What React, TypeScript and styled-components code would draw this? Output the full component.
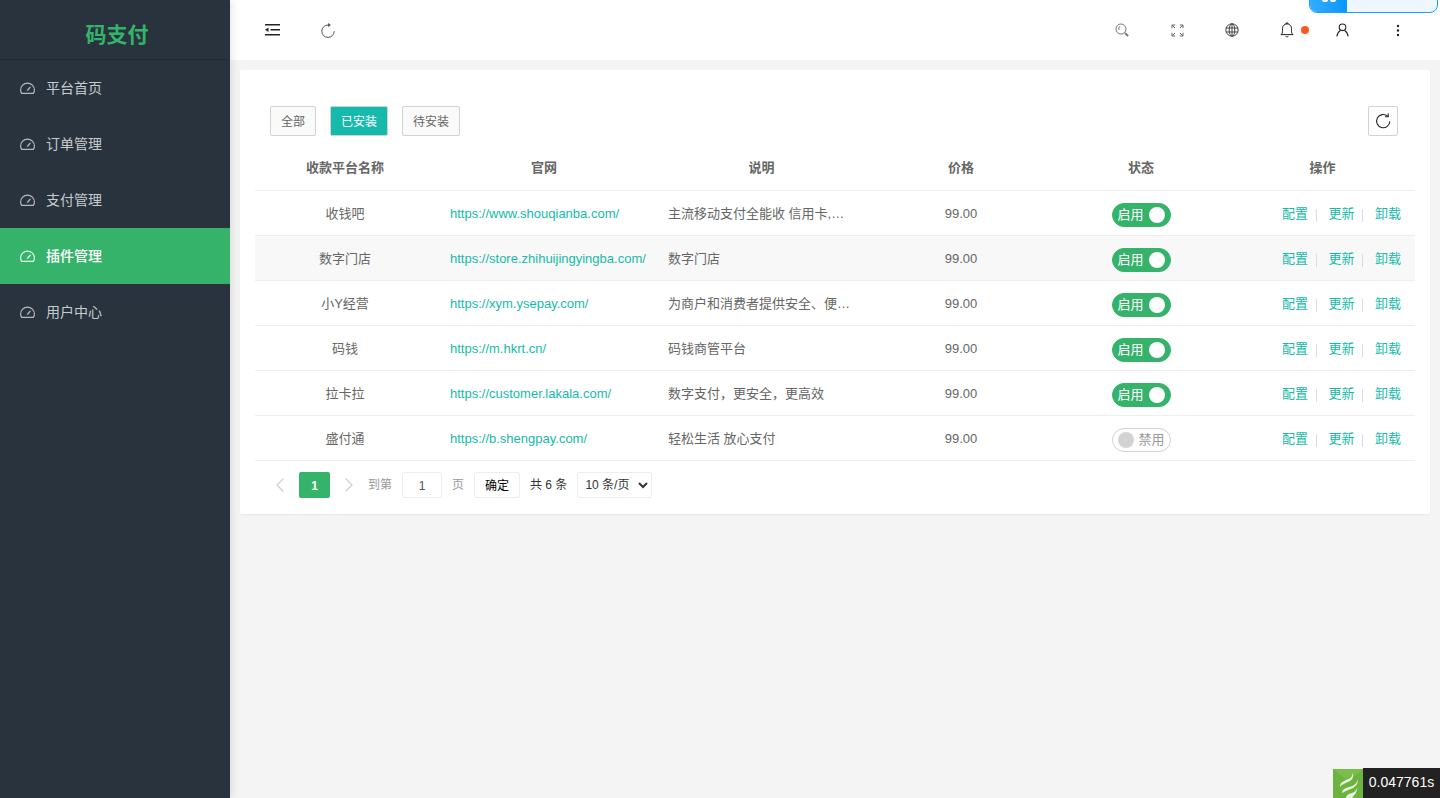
import React from 'react';
import styled, { createGlobalStyle } from 'styled-components';

const GlobalStyle = createGlobalStyle`
  html, body { margin: 0; padding: 0; height: 100%; }
  body {
    background: #f4f4f4;
    font-family: "Liberation Sans", "Noto Sans CJK SC", sans-serif;
    font-size: 13px;
    line-height: 20px;
    color: #666;
    overflow: hidden;
  }
  * { box-sizing: border-box; }
`;

const Page = styled.div`
  display: flex;
  width: 1440px;
  height: 798px;
`;

const Sidebar = styled.aside`
  width: 230px;
  flex-shrink: 0;
  background: #28333e;
  box-shadow: 2px 0 8px rgba(0, 0, 0, 0.1);
  position: relative;
`;

const Brand = styled.div`
  height: 60px;
  display: flex;
  align-items: center;
  justify-content: center;
  font-size: 21px;
  font-weight: 700;
  color: #35b36b;
  border-bottom: 1px solid #222c36;
  padding-top: 11px;
  padding-left: 4px;
`;

const NavList = styled.nav`
  display: flex;
  flex-direction: column;
`;

const NavItem = styled.a<{ $active?: boolean }>`
  height: 56px;
  display: flex;
  align-items: center;
  gap: 11px;
  padding-left: 20px;
  font-size: 14px;
  color: ${p => (p.$active ? '#fff' : '#c7cbcf')};
  background: ${p => (p.$active ? '#35b36b' : 'transparent')};
  font-weight: ${p => (p.$active ? 500 : 400)};
`;

const Main = styled.div`
  flex: 1;
  display: flex;
  flex-direction: column;
  min-width: 0;
`;

const Header = styled.header`
  height: 60px;
  background: #fff;
  display: flex;
  align-items: center;
  justify-content: space-between;
`;

const HeaderGroup = styled.div`
  display: flex;
  align-items: center;
`;

const HeaderIcon = styled.span<{ $nudge?: boolean }>`
  width: 55px;
  height: 60px;
  padding-right: ${p => (p.$nudge ? '2px' : '0')};
  display: flex;
  align-items: center;
  justify-content: center;
  position: relative;
`;

const LeftIcons = styled(HeaderGroup)`
  padding-left: 15px;
`;

const RightIcons = styled(HeaderGroup)`
  padding-right: 15px;
`;

const Dot = styled.i`
  position: absolute;
  left: 41px;
  top: 26px;
  width: 8px;
  height: 8px;
  border-radius: 50%;
  background: #ff5722;
`;

const Content = styled.main`
  padding: 10px;
`;

const Card = styled.section`
  background: #fff;
  height: 444px;
  padding: 36px 15px 0;
  border-radius: 2px;
  box-shadow: 0 1px 2px rgba(0, 0, 0, 0.05);
`;

const Toolbar = styled.div`
  display: flex;
  align-items: center;
  gap: 14px;
  padding: 0 17px 0 15px;
  height: 30px;
`;

const TabButton = styled.button<{ $active?: boolean }>`
  height: 30px;
  padding: 2px 10px 0;
  font: inherit;
  font-size: 12px;
  border-radius: 2px;
  border: 1px solid ${p => (p.$active ? '#c9d6d3' : '#d2d2d2')};
  background: ${p => (p.$active ? '#16baaa' : '#fafafa')};
  color: ${p => (p.$active ? '#fff' : '#666')};
`;

const RefreshButton = styled.button`
  margin-left: auto;
  width: 30px;
  height: 30px;
  padding: 0;
  display: flex;
  align-items: center;
  justify-content: center;
  background: #fff;
  border: 1px solid #d2d2d2;
  border-radius: 2px;
`;

const Table = styled.table`
  width: 1160px;
  margin-top: 10px;
  border-collapse: collapse;
  table-layout: fixed;
`;

const Th = styled.th<{ $w: number }>`
  width: ${p => p.$w}px;
  height: 44px;
  padding: 0;
  font-size: 13px;
  font-weight: 700;
  color: #666;
  text-align: center;
  border-bottom: 1px solid #eee;
`;

const Row = styled.tr<{ $shade?: boolean }>`
  height: 45px;
  background: ${p => (p.$shade ? '#f8f8f8' : '#fff')};
`;

const Td = styled.td<{ $left?: boolean }>`
  padding: 2px ${p => (p.$left ? '15px' : '0')} 0;
  text-align: ${p => (p.$left ? 'left' : 'center')};
  border-bottom: 1px solid #eee;
  color: #666;
  white-space: nowrap;
`;

const Link = styled.a`
  color: #16baaa;
`;

const Switch = styled.span<{ $on: boolean }>`
  display: flex;
  flex-direction: ${p => (p.$on ? 'row' : 'row-reverse')};
  align-items: center;
  justify-content: space-between;
  width: 59px;
  height: 24px;
  margin: 3px auto 0;
  padding: 0 5px;
  border-radius: 12px;
  background: ${p => (p.$on ? '#35b36b' : '#fff')};
  border: 1px solid ${p => (p.$on ? '#35b36b' : '#d2d2d2')};
  color: ${p => (p.$on ? '#fff' : '#999')};
  font-size: 13px;
`;

const Knob = styled.i<{ $on: boolean }>`
  width: 16px;
  height: 16px;
  border-radius: 50%;
  background: ${p => (p.$on ? '#fff' : '#d2d2d2')};
`;

const Actions = styled.div`
  display: flex;
  align-items: center;
  justify-content: flex-end;
  padding-right: 14px;
`;

const ActionLink = styled.a`
  color: #16baaa;
`;

const Divider = styled.i`
  width: 1px;
  height: 13px;
  margin: 3px 11.5px 0 8px;
  background: #d8dce3;
`;

const Pager = styled.div`
  display: flex;
  align-items: center;
  height: 48px;
  padding-left: 20px;
  font-size: 12px;
  color: #999;
`;

const PageArrow = styled.span`
  width: 10px;
  height: 26px;
  display: flex;
  align-items: center;
  justify-content: center;
`;

const PageCurrent = styled.span`
  width: 31px;
  height: 26px;
  margin: 0 14px;
  padding-top: 2px;
  border-radius: 2px;
  background: #35b36b;
  color: #fff;
  font-weight: 700;
  display: flex;
  align-items: center;
  justify-content: center;
`;

const PagerBox = styled.span<{ $w: number; $dark?: boolean }>`
  width: ${p => p.$w}px;
  height: 26px;
  padding-top: 2px;
  border: 1px solid #eee;
  border-radius: 2px;
  display: flex;
  align-items: center;
  justify-content: center;
  background: #fff;
  color: ${p => (p.$dark ? '#000' : '#555')};
`;

const PagerText = styled.span<{ $dark?: boolean; $ml: number; $mr: number }>`
  margin: 0 ${p => p.$mr}px 0 ${p => p.$ml}px;
  color: ${p => (p.$dark ? '#333' : '#999')};
`;

const SizeSelect = styled.select`
  width: 75px;
  height: 26px;
  padding: 0 0 0 3px;
  font: inherit;
  font-size: 12px;
  color: #333;
  background: #fff;
  border: 1px solid #eee;
  border-radius: 2px;
`;

const Notice = styled.div`
  position: absolute;
  right: 2px;
  top: -14px;
  width: 129px;
  height: 27px;
  border: 1px solid #1e9fff;
  border-radius: 8px;
  background: #eef7ff;
  overflow: hidden;
`;

const NoticeBadge = styled.div`
  width: 37px;
  height: 100%;
  background: linear-gradient(90deg, #35adff, #0a96ff);
  display: flex;
  align-items: flex-end;
  justify-content: center;
  gap: 2px;
  padding-bottom: 10px;
`;

const NoticeDot = styled.i`
  width: 6px;
  height: 6px;
  border-radius: 2px;
  background: #fff;
`;

const Trace = styled.div`
  position: absolute;
  right: 0;
  bottom: 0;
  display: flex;
  align-items: flex-end;
`;

const TraceLogo = styled.div`
  width: 30px;
  height: 29px;
  display: flex;
`;

const TraceTime = styled.div`
  width: 77px;
  height: 30px;
  background: #222;
  color: #fff;
  font-size: 14px;
  line-height: 29px;
  text-align: center;
`;

const Gauge = ({ color }: { color: string }) => (
  <svg width="15" height="15" viewBox="0 0 15 15" fill="none" stroke={color} strokeWidth="1.2">
    <path d="M1.6 12.4C.9 11.3.6 10.2.6 9a6.9 6.9 0 0 1 13.8 0c0 1.2-.3 2.3-1 3.4z" />
    <path d="M7.2 9.6 10.4 6" strokeWidth="1.4" />
  </svg>
);

const ShrinkIcon = () => (
  <svg width="15" height="14" viewBox="0 0 15 14" fill="#222">
    <rect x="0" y="1" width="15" height="1.5" />
    <rect x="5.5" y="6" width="9.5" height="1.5" />
    <rect x="0" y="11" width="15" height="1.5" />
    <path d="M0 6.7 3.5 4.6v4.3z" />
  </svg>
);

const HeaderReload = () => (
  <svg width="14" height="15" viewBox="0 0 14 15" fill="none" stroke="#555" strokeWidth="1">
    <path d="M13.2 8.2A6.2 6.2 0 1 1 7 2" />
    <path d="M7 0 10 2 7 4z" fill="#555" stroke="none" />
  </svg>
);

const RefreshIcon = () => (
  <svg width="16" height="16" viewBox="0 0 16 16" fill="none" stroke="#222" strokeWidth="1.1">
    <path d="M14.8 8.2A6.6 6.6 0 1 1 12.6 3.2" />
    <path d="M13.2.6v3.2H10" />
  </svg>
);

const SearchIcon = () => (
  <svg width="14" height="14" viewBox="0 0 14 14" fill="none" stroke="#777" strokeWidth="1">
    <circle cx="6" cy="6" r="5" />
    <path d="M5 3.2A3 3 0 0 0 4 7" />
    <path d="M10 10l3.2 3.2" strokeWidth="1.8" />
  </svg>
);

const ExpandIcon = () => (
  <svg width="13" height="13" viewBox="0 0 13 13" fill="none" stroke="#666" strokeWidth="1">
    <path d="M1 4.2V1h3.2M1 1l3 3M12 4.2V1H8.8M12 1 9 4M1 8.8V12h3.2M1 12l3-3M12 8.8V12H8.8M12 12 9 9" />
  </svg>
);

const GlobeIcon = () => (
  <svg width="14" height="14" viewBox="0 0 14 14" fill="none" stroke="#333" strokeWidth="0.9">
    <circle cx="7" cy="7" r="6.2" />
    <ellipse cx="7" cy="7" rx="2.8" ry="6.2" />
    <path d="M7 .8v12.4M1 5h12M1 9h12" />
  </svg>
);

const BellIcon = () => (
  <svg width="14" height="16" viewBox="0 0 14 16" fill="none" stroke="#222" strokeWidth="1">
    <path d="M1 12.6c1.2-1 1.5-2 1.5-4V6.4a4.5 4.5 0 0 1 9 0v2.2c0 2 .3 3 1.5 4z" />
    <path d="M6 1.9V1h2v.9M5.6 14.3c.7.7 2.1.7 2.8 0" />
  </svg>
);

const UserIcon = () => (
  <svg width="13" height="14" viewBox="0 0 13 14" fill="none" stroke="#222" strokeWidth="1.1">
    <circle cx="6.5" cy="4.3" r="3.3" />
    <path d="M.8 13.4C1.3 10.4 2.6 8.4 4.4 7.4M12.2 13.4c-.5-3-1.8-5-3.6-6" />
  </svg>
);

const MoreIcon = () => (
  <svg width="4" height="13" viewBox="0 0 4 13" fill="#222">
    <circle cx="2" cy="2" r="1.2" />
    <circle cx="2" cy="6.5" r="1.2" />
    <circle cx="2" cy="11" r="1.2" />
  </svg>
);

const Chevron = ({ dir }: { dir: 'left' | 'right' }) => (
  <svg width="10" height="16" viewBox="0 0 10 16" fill="none" stroke="#d2d2d2" strokeWidth="1.4">
    <path d={dir === 'left' ? 'M8.5 1.5 2 8l6.5 6.5' : 'M1.5 1.5 8 8l-6.5 6.5'} />
  </svg>
);

const LogoMark = () => (
  <svg width="30" height="29" viewBox="0 0 30 29">
    <rect width="30" height="29" fill="#6cb33f" />
    <path d="M0 0h30L15 12z" fill="#79bd4a" />
    <path d="M19 4c1 4-2 6-6 7-4 2-6 3-6 7 2-3 6-4 10-6 3-2 4-5 2-8z" fill="#e9f3df" />
    <path d="M24 10c1 4-3 7-8 8-4 1-7 3-7 6 3-2 7-3 11-5 3-2 6-5 4-9z" fill="#e9f3df" />
    <path d="M24 18c0 4-4 6-8 7-2 1-3 2-3 4h6c1-2 6-5 5-11z" fill="#e9f3df" />
  </svg>
);

const navItems = ['平台首页', '订单管理', '支付管理', '插件管理', '用户中心'];
const tabs = ['全部', '已安装', '待安装'];
const columns: [string, number][] = [
  ['收款平台名称', 180],
  ['官网', 218],
  ['说明', 217],
  ['价格', 182],
  ['状态', 178],
  ['操作', 185],
];

const plugins = [
  { name: '收钱吧', url: 'https://www.shouqianba.com/', desc: '主流移动支付全能收 信用卡,…', on: true },
  { name: '数字门店', url: 'https://store.zhihuijingyingba.com/', desc: '数字门店', on: true },
  { name: '小Y经营', url: 'https://xym.ysepay.com/', desc: '为商户和消费者提供安全、便…', on: true },
  { name: '码钱', url: 'https://m.hkrt.cn/', desc: '码钱商管平台', on: true },
  { name: '拉卡拉', url: 'https://customer.lakala.com/', desc: '数字支付，更安全，更高效', on: true },
  { name: '盛付通', url: 'https://b.shengpay.com/', desc: '轻松生活 放心支付', on: false },
];

export default function App() {
  return (
    <>
      <GlobalStyle />
      <Page>
        <Sidebar>
          <Brand>码支付</Brand>
          <NavList>
            {navItems.map((item, i) => (
              <NavItem key={item} $active={i === 3}>
                <Gauge color={i === 3 ? '#e6f6ec' : '#b4b9be'} />
                {item}
              </NavItem>
            ))}
          </NavList>
        </Sidebar>
        <Main>
          <Header>
            <LeftIcons>
              <HeaderIcon><ShrinkIcon /></HeaderIcon>
              <HeaderIcon><HeaderReload /></HeaderIcon>
            </LeftIcons>
            <RightIcons>
              <HeaderIcon $nudge><SearchIcon /></HeaderIcon>
              <HeaderIcon><ExpandIcon /></HeaderIcon>
              <HeaderIcon $nudge><GlobeIcon /></HeaderIcon>
              <HeaderIcon $nudge><BellIcon /><Dot /></HeaderIcon>
              <HeaderIcon><UserIcon /></HeaderIcon>
              <HeaderIcon><MoreIcon /></HeaderIcon>
            </RightIcons>
          </Header>
          <Content>
            <Card>
              <Toolbar>
                {tabs.map((tab, i) => (
                  <TabButton key={tab} $active={i === 1}>{tab}</TabButton>
                ))}
                <RefreshButton><RefreshIcon /></RefreshButton>
              </Toolbar>
              <Table>
                <thead>
                  <tr>
                    {columns.map(([label, w]) => (
                      <Th key={label} $w={w}>{label}</Th>
                    ))}
                  </tr>
                </thead>
                <tbody>
                  {plugins.map((p, i) => (
                    <Row key={p.name} $shade={i === 1}>
                      <Td>{p.name}</Td>
                      <Td $left><Link>{p.url}</Link></Td>
                      <Td $left>{p.desc}</Td>
                      <Td>99.00</Td>
                      <Td>
                        <Switch $on={p.on}>
                          {p.on ? '启用' : '禁用'}
                          <Knob $on={p.on} />
                        </Switch>
                      </Td>
                      <Td>
                        <Actions>
                          <ActionLink>配置</ActionLink>
                          <Divider />
                          <ActionLink>更新</ActionLink>
                          <Divider />
                          <ActionLink>卸载</ActionLink>
                        </Actions>
                      </Td>
                    </Row>
                  ))}
                </tbody>
              </Table>
              <Pager>
                <PageArrow><Chevron dir="left" /></PageArrow>
                <PageCurrent>1</PageCurrent>
                <PageArrow><Chevron dir="right" /></PageArrow>
                <PagerText $ml={14} $mr={10}>到第</PagerText>
                <PagerBox $w={40}>1</PagerBox>
                <PagerText $ml={10} $mr={10}>页</PagerText>
                <PagerBox $w={46} $dark>确定</PagerBox>
                <PagerText $dark $ml={10} $mr={10}>共 6 条</PagerText>
                <SizeSelect defaultValue="10">
                  <option value="10">10 条/页</option>
                  <option value="20">20 条/页</option>
                </SizeSelect>
              </Pager>
            </Card>
          </Content>
        </Main>
      </Page>
      <Notice><NoticeBadge><NoticeDot /><NoticeDot /></NoticeBadge></Notice>
      <Trace>
        <TraceLogo><LogoMark /></TraceLogo>
        <TraceTime>0.047761s</TraceTime>
      </Trace>
    </>
  );
}
